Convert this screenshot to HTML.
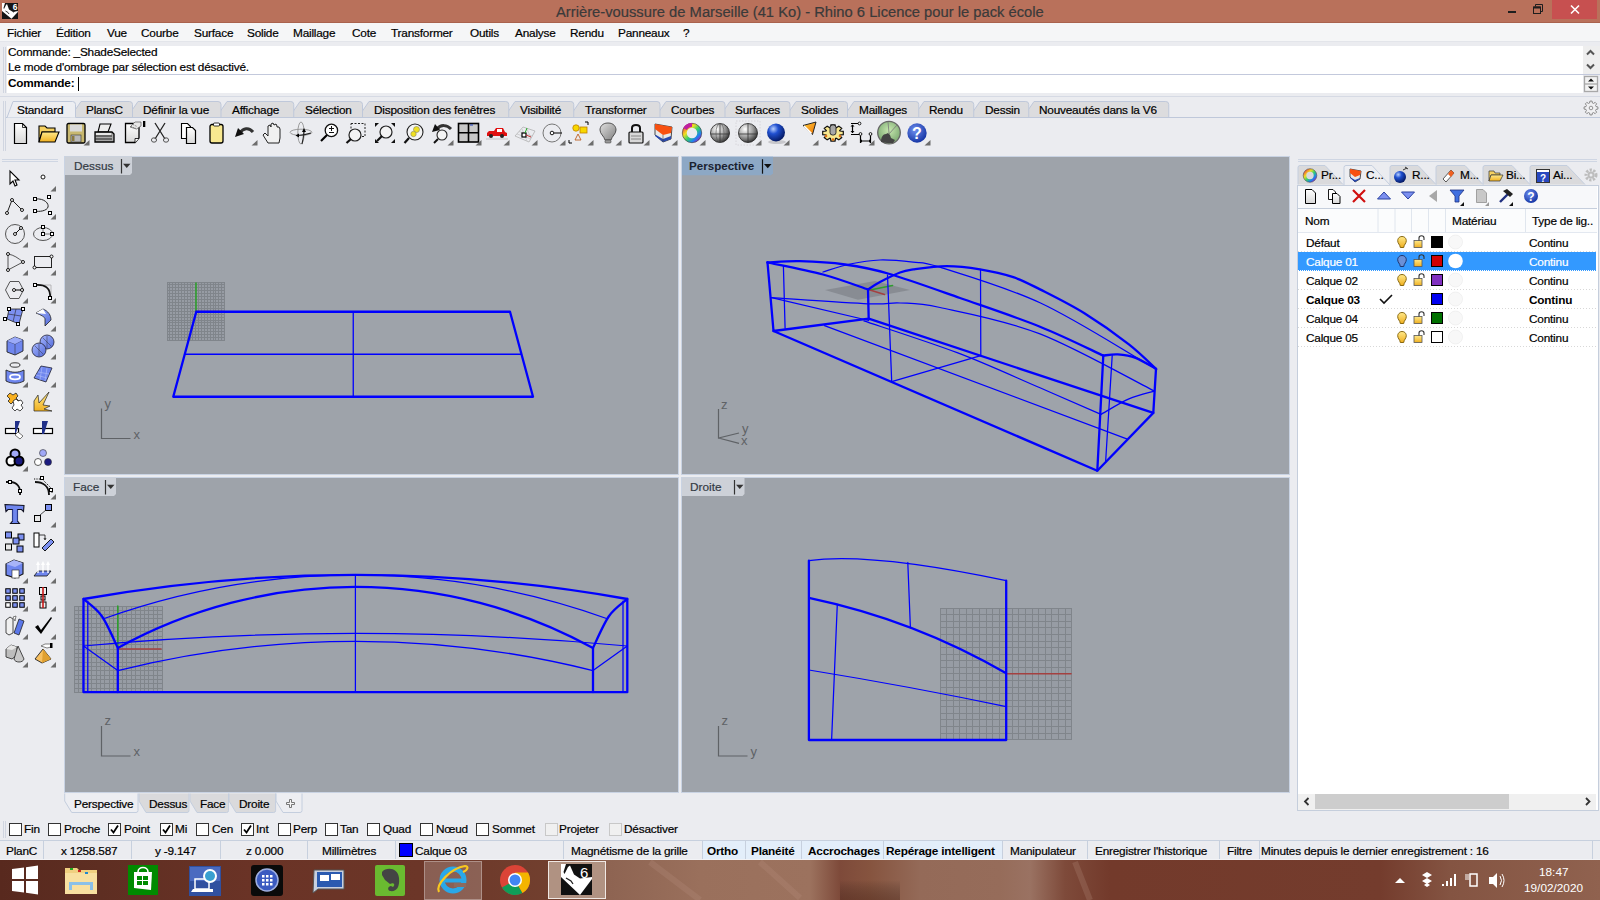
<!DOCTYPE html>
<html><head><meta charset="utf-8">
<style>
*{margin:0;padding:0;box-sizing:border-box}
html,body{width:1600px;height:900px;overflow:hidden;background:#EBECF0;font-family:"Liberation Sans",sans-serif;font-size:11.6px;color:#000}
.a{position:absolute}
.t{position:absolute;white-space:nowrap;line-height:14px;-webkit-text-stroke:0.2px currentColor}
svg{position:absolute;left:0;top:0}
</style></head><body>
<div class="a" style="left:0px;top:0px;width:1600px;height:23px;background:#B9715B"></div>
<div class="a" style="left:0px;top:23px;width:1600px;height:18px;background:#F5F6F7"></div>
<div class="a" style="left:0px;top:41px;width:1600px;height:1px;background:#E3E5EA"></div>
<div class="a" style="left:7px;top:46px;width:1576px;height:47px;background:#fff"></div>
<div class="a" style="left:7px;top:74px;width:1593px;height:1px;background:#C3C9DC"></div>
<div class="a" style="left:3px;top:47px;width:1px;height:46px;background:#D0D5E0"></div>
<div class="a" style="left:5px;top:47px;width:1px;height:46px;background:#D0D5E0"></div>
<div class="a" style="left:0px;top:96px;width:1600px;height:1px;background:#D6DAE4"></div>
<div class="a" style="left:3px;top:101px;width:1px;height:50px;background:#D0D5E0"></div>
<div class="a" style="left:5px;top:101px;width:1px;height:50px;background:#D0D5E0"></div>
<div class="a" style="left:6px;top:117px;width:1594px;height:1px;background:#BCC8DA"></div>
<div class="a" style="left:64px;top:156px;width:615px;height:319px;background:#C9D3E3"></div>
<div class="a" style="left:65px;top:157px;width:613px;height:317px;background:#9EA3AA"></div>
<div class="a" style="left:681px;top:156px;width:609px;height:319px;background:#C9D3E3"></div>
<div class="a" style="left:682px;top:157px;width:607px;height:317px;background:#9EA3AA"></div>
<div class="a" style="left:64px;top:477px;width:615px;height:316px;background:#C9D3E3"></div>
<div class="a" style="left:65px;top:478px;width:613px;height:314px;background:#9EA3AA"></div>
<div class="a" style="left:681px;top:477px;width:609px;height:316px;background:#C9D3E3"></div>
<div class="a" style="left:682px;top:478px;width:607px;height:314px;background:#9EA3AA"></div>
<div class="a" style="left:1297px;top:185px;width:302px;height:626px;background:#fff;border:1px solid #C5CEDC"></div>
<div class="a" style="left:1298px;top:186px;width:299px;height:23px;background:#F7F8FA"></div>
<div class="a" style="left:1298px;top:208px;width:299px;height:1px;background:#C5CEDC"></div>
<div class="a" style="left:1298px;top:209px;width:299px;height:23px;background:#FBFCFD"></div>
<div class="a" style="left:1298px;top:232px;width:299px;height:1px;background:#E3E8F0"></div>
<div class="a" style="left:1298px;top:252px;width:298px;height:19px;background:#3399FF"></div>
<div class="a" style="left:1298px;top:794px;width:298px;height:15.5px;background:#F0F0F0"></div>
<div class="a" style="left:1315px;top:794px;width:194px;height:15px;background:#CDCDCD"></div>
<div class="a" style="left:0px;top:840px;width:1600px;height:1px;background:#C7D0DE"></div>
<div class="a" style="left:0px;top:841px;width:1600px;height:18px;background:#EBECF0"></div>
<div class="a" style="left:702px;top:841px;width:301px;height:18px;background:#E3EEFA"></div>
<div class="a" style="left:43px;top:841px;width:1px;height:18px;background:#C7D0DE"></div>
<div class="a" style="left:131px;top:841px;width:1px;height:18px;background:#C7D0DE"></div>
<div class="a" style="left:220px;top:841px;width:1px;height:18px;background:#C7D0DE"></div>
<div class="a" style="left:307px;top:841px;width:1px;height:18px;background:#C7D0DE"></div>
<div class="a" style="left:395px;top:841px;width:1px;height:18px;background:#C7D0DE"></div>
<div class="a" style="left:563px;top:841px;width:1px;height:18px;background:#C7D0DE"></div>
<div class="a" style="left:702px;top:841px;width:1px;height:18px;background:#C7D0DE"></div>
<div class="a" style="left:745px;top:841px;width:1px;height:18px;background:#C7D0DE"></div>
<div class="a" style="left:801px;top:841px;width:1px;height:18px;background:#C7D0DE"></div>
<div class="a" style="left:883px;top:841px;width:1px;height:18px;background:#C7D0DE"></div>
<div class="a" style="left:1002px;top:841px;width:1px;height:18px;background:#C7D0DE"></div>
<div class="a" style="left:1087px;top:841px;width:1px;height:18px;background:#C7D0DE"></div>
<div class="a" style="left:1219px;top:841px;width:1px;height:18px;background:#C7D0DE"></div>
<div class="a" style="left:1259px;top:841px;width:1px;height:18px;background:#C7D0DE"></div>
<div class="a" style="left:1592px;top:841px;width:1px;height:18px;background:#C7D0DE"></div>
<div class="a" style="left:399px;top:843px;width:14px;height:14px;background:#0000FF;border:1px solid #000"></div>
<div class="a" style="left:0px;top:859px;width:1600px;height:1px;background:#F2F3F6"></div>
<div class="a" style="left:0px;top:860px;width:1600px;height:40px;background:linear-gradient(90deg,#58291E 0px,#5E2E22 100px,#6A3326 250px,#6C3628 420px,#72402F 560px,#8E6452 610px,#9A705C 700px,#9C725E 810px,#7E4A3A 840px,#86543F 870px,#946A58 920px,#966C5A 1000px,#9A7262 1030px,#7E4A3A 1065px,#733A2B 1110px,#743C2D 1380px,#845442 1450px,#90624F 1600px)"></div>
<div class="a" style="left:424px;top:861px;width:58px;height:39px;background:rgba(255,255,255,0.2);border:1px solid rgba(255,255,255,0.3)"></div>
<div class="a" style="left:548px;top:861px;width:58px;height:38px;background:#B09282;border:1px solid #F0E8E4"></div>
<svg width="1600" height="900" viewBox="0 0 1600 900">
<defs>
<linearGradient id="gDoc" x1="0" y1="0" x2="0" y2="1"><stop offset="0" stop-color="#fff"/><stop offset="1" stop-color="#D8D8D8"/></linearGradient>
<linearGradient id="gYel" x1="0" y1="0" x2="0" y2="1"><stop offset="0" stop-color="#FFE98A"/><stop offset="1" stop-color="#F0B020"/></linearGradient>
<radialGradient id="gSph" cx="0.35" cy="0.3" r="0.8"><stop offset="0" stop-color="#fff"/><stop offset="0.5" stop-color="#A0A0A0"/><stop offset="1" stop-color="#202020"/></radialGradient>
<radialGradient id="gBlue" cx="0.35" cy="0.3" r="0.8"><stop offset="0" stop-color="#B8D0FF"/><stop offset="0.35" stop-color="#2050D0"/><stop offset="1" stop-color="#001050"/></radialGradient>
<radialGradient id="gHelp" cx="0.4" cy="0.35" r="0.7"><stop offset="0" stop-color="#7090F0"/><stop offset="1" stop-color="#1030A0"/></radialGradient>
<radialGradient id="gGreen" cx="0.5" cy="0.4" r="0.6"><stop offset="0" stop-color="#C8E8B0"/><stop offset="1" stop-color="#7AA870"/></radialGradient>
<linearGradient id="gLB" x1="0" y1="0" x2="1" y2="1"><stop offset="0" stop-color="#A8B8FF"/><stop offset="1" stop-color="#5068D8"/></linearGradient>
<linearGradient id="gBulb" x1="0" y1="0" x2="1" y2="1"><stop offset="0" stop-color="#E0E0E0"/><stop offset="1" stop-color="#808080"/></linearGradient>
</defs>
<g transform="translate(12,123)"><path d="M2.5,0.5H10.5L14.5,4.5V20.5H2.5Z" fill="url(#gDoc)" stroke="#000" stroke-width="1.2"/><path d="M10.5,0.5V4.5H14.5" fill="none" stroke="#000" stroke-width="0.8"/></g>
<g transform="translate(38,123)"><path d="M1,3H7L9,5H17V9H4L1,19Z" fill="#F5D060" stroke="#000" stroke-width="1.1"/><path d="M4,9H21L17,19H1Z" fill="url(#gYel)" stroke="#000" stroke-width="1.1"/></g>
<g transform="translate(66,123)"><rect x="1" y="0.5" width="18" height="19.5" rx="1.5" fill="#C8B870" stroke="#000" stroke-width="1.3"/><rect x="4" y="1.5" width="12" height="7" fill="#DADADA"/><rect x="5" y="12" width="10" height="7" fill="#B8B8B8" stroke="#333" stroke-width="0.6"/><rect x="6" y="13" width="2.5" height="5" fill="#8A7A40"/></g>
<path d="M89.5,140V145.6H83.5Z" fill="#6D6D6D"/>
<g transform="translate(94,123)"><path d="M6,1H17L14,9H4Z" fill="#EEE" stroke="#000" stroke-width="1.1"/><path d="M1,9H18L20,11V19H1Z" fill="#A8A8A8" stroke="#000" stroke-width="1.3"/><path d="M1,13H18M1,16H18" stroke="#222" stroke-width="1.2"/><rect x="2" y="10" width="15" height="2" fill="#E8E8E8"/></g>
<path d="M125.5,123.5H139V138L135,142.5H125.5Z" fill="url(#gDoc)" stroke="#000" stroke-width="1.3"/><path d="M135,142.5V138.5H139" fill="#fff" stroke="#000" stroke-width="0.8"/>
<path d="M130,127L135,122H141V126L136.5,129Z" fill="#E8E8E8" stroke="#555" stroke-width="0.7"/><path d="M131,126.5L136,128.5M133,124.5L137,126.5" stroke="#777" stroke-width="1" stroke-dasharray="1,1"/><rect x="143" y="121" width="2.3" height="6" fill="#000"/>
<g transform="translate(150,123)"><path d="M5,0L15,16M15,0L5,16" stroke="#222" stroke-width="1.3"/><ellipse cx="4" cy="17" rx="2.6" ry="2.2" fill="none" stroke="#555" stroke-width="1"/><ellipse cx="16" cy="17" rx="2.6" ry="2.2" fill="none" stroke="#555" stroke-width="1"/></g>
<g transform="translate(179,123)"><path d="M2.5,0.5H8.5L11.5,3.5V15.5H2.5Z" fill="#fff" stroke="#000" stroke-width="1.1"/><path d="M7.5,4.5H13.5L16.5,7.5V20.5H7.5Z" fill="url(#gDoc)" stroke="#000" stroke-width="1.2"/></g>
<g transform="translate(207,123)"><rect x="3" y="1.5" width="13" height="18.5" rx="2" fill="#F8E890" stroke="#000" stroke-width="1.3"/><rect x="6.5" y="0" width="6" height="3" rx="1" fill="#fff" stroke="#000" stroke-width="0.8"/></g>
<g transform="translate(234,123)"><path d="M6,10C9,5 15,4 19,9" fill="none" stroke="#333" stroke-width="3"/><path d="M1,14L4,5L10,11Z" fill="#111"/></g>
<path d="M257.5,140V145.6H251.5Z" fill="#6D6D6D"/>
<g transform="translate(262,123)"><path d="M6,20L1,12L3,10L6,13V3L8,2L9,4V1L11,0L12,2V2L14,1L15,3V4L17,4L18,6V15L17,20Z" fill="#F0F0F0" stroke="#222" stroke-width="1"/></g>
<ellipse cx="301" cy="132.3" rx="10.9" ry="3.1" fill="none" stroke="#888" stroke-width="0.8"/><ellipse cx="301" cy="133" rx="3.2" ry="11" fill="none" stroke="#888" stroke-width="0.8"/><path d="M298,135.5Q305,135 311,133M304,131Q303.5,138 302,144" fill="none" stroke="#222" stroke-width="1.1"/><path d="M304,128L306,132H302ZM295.5,135.5L299,133.5V137.5Z" fill="#000"/>
<circle cx="331.4" cy="130.4" r="6.2" fill="#fff" stroke="#111" stroke-width="1.3"/><path d="M327,135L321,141" stroke="#000" stroke-width="2.2"/><path d="M329,128.5H334M331.5,126V131M329,132.5H334" stroke="#111" stroke-width="1"/>
<g transform="translate(346,123)"><rect x="5" y="0.5" width="14" height="13" fill="none" stroke="#222" stroke-width="1" stroke-dasharray="2,1.5"/><circle cx="9" cy="12" r="6" fill="#F4F4F4" stroke="#222" stroke-width="1.2"/><path d="M5,16L0.5,20" stroke="#111" stroke-width="2.2"/></g>
<g transform="translate(375,123)"><path d="M0,0H4L0,4ZM20,0H16L20,4ZM0,20H4L0,16ZM20,20H16L20,16Z" fill="#111"/><circle cx="11" cy="9" r="6" fill="#F4F4F4" stroke="#222" stroke-width="1.2"/><path d="M7,13L2,18" stroke="#111" stroke-width="2.2"/></g>
<g transform="translate(404,123)"><circle cx="11" cy="9" r="8" fill="#F4F4F4" stroke="#222" stroke-width="1.1"/><circle cx="12.5" cy="6.5" r="3" fill="#F0E020" stroke="#886" stroke-width="0.6"/><circle cx="9.5" cy="11" r="2.7" fill="#F0E020" stroke="#886" stroke-width="0.6"/><path d="M5,15L0.5,20" stroke="#111" stroke-width="2.2"/></g>
<g transform="translate(432,123)"><path d="M5,6C9,1 15,2 19,6" fill="none" stroke="#333" stroke-width="3"/><path d="M0,9L3,1L8,7Z" fill="#111"/><circle cx="10" cy="12" r="5" fill="#F4F4F4" stroke="#222" stroke-width="1.1"/><path d="M6,16L2,20" stroke="#111" stroke-width="2"/></g>
<path d="M453.5,140V145.6H447.5Z" fill="#6D6D6D"/>
<g transform="translate(458,123)"><rect x="0.5" y="0.5" width="20" height="18.5" fill="#C8C8C8" stroke="#000" stroke-width="1.6"/><path d="M10.5,0.5V19M0.5,9.8H20.5" stroke="#000" stroke-width="1.6"/><rect x="12" y="1.5" width="3" height="1" fill="#2040C0"/></g>
<path d="M481.5,140V145.6H475.5Z" fill="#6D6D6D"/>
<g transform="translate(486,123)"><path d="M1,10L3,8H8L10,5H17L19,9L21,10V13H1Z" fill="#E01010"/><rect x="11" y="6" width="5" height="3" fill="#fff"/><circle cx="5" cy="13" r="2" fill="#222"/><circle cx="16" cy="13" r="2" fill="#222"/><path d="M0,16H22" stroke="#AAA" stroke-width="0.6"/></g>
<path d="M509.5,140V145.6H503.5Z" fill="#6D6D6D"/>
<g transform="translate(514,123)"><path d="M1,13L9,4L21,8L15,19Z" fill="none" stroke="#AAA" stroke-width="0.7"/><path d="M5,8.5L18,13M3,11L17,16M8,6L13,18M13,6L17,15" stroke="#BBB" stroke-width="0.6"/><rect x="8" y="10" width="4" height="4" fill="#fff" stroke="#000" stroke-width="1.2"/><path d="M11,10L13,5" stroke="#2A2" stroke-width="1"/><path d="M12,12L17,14" stroke="#C33" stroke-width="1"/></g>
<path d="M537.5,140V145.6H531.5Z" fill="#6D6D6D"/>
<g transform="translate(542,123)"><circle cx="10" cy="10" r="9" fill="none" stroke="#777" stroke-width="1"/><circle cx="10" cy="10" r="1.8" fill="#fff" stroke="#000" stroke-width="0.9"/><path d="M12,10H20" stroke="#000" stroke-width="1"/></g>
<path d="M565.5,140V145.6H559.5Z" fill="#6D6D6D"/>
<g transform="translate(570,123)"><circle cx="6" cy="5" r="3.2" fill="#F8D800" stroke="#C08000" stroke-width="0.8"/><rect x="10" y="4" width="7" height="6" fill="#F8D800" stroke="#C08000" stroke-width="0.8"/><path d="M8,11L11,17H5Z" fill="none" stroke="#C06020" stroke-width="0.9"/><path d="M15,-1H18V2M-1,17V20H2" fill="none" stroke="#000" stroke-width="1"/></g>
<path d="M593.5,140V145.6H587.5Z" fill="#6D6D6D"/>
<g transform="translate(598,123)"><path d="M10,0C4,0 2,4 2,7C2,11 6,13 7,17H13C14,13 18,11 18,7C18,4 16,0 10,0Z" fill="url(#gBulb)" stroke="#444" stroke-width="0.9"/><rect x="7" y="17" width="6" height="3" rx="1" fill="#999" stroke="#444" stroke-width="0.6"/></g>
<path d="M621.5,140V145.6H615.5Z" fill="#6D6D6D"/>
<g transform="translate(626,123)"><path d="M6,9V5C6,1 14,1 14,5V9" fill="none" stroke="#111" stroke-width="2"/><rect x="3" y="9" width="14" height="11" rx="1" fill="#D8D8D8" stroke="#111" stroke-width="1.2"/><path d="M5,13H15M5,16H15" stroke="#888" stroke-width="1"/></g>
<path d="M649.5,140V145.6H643.5Z" fill="#6D6D6D"/>
<g transform="translate(654,123)"><path d="M1,1L18,4L17,16L9,19L1,12Z" fill="#E8E8E8" stroke="#222" stroke-width="0.8"/><path d="M1,1L18,4L17,10L9,12L1,6Z" fill="#F85010"/><path d="M2,12L9,16L17,13L17,16L9,19L1,13Z" fill="#2848B0"/><path d="M9,12V19" stroke="#444" stroke-width="0.6"/></g>
<path d="M677.5,140V145.6H671.5Z" fill="#6D6D6D"/>
<g transform="translate(682,123)"><circle cx="10" cy="10" r="7.5" fill="none" stroke="url(#cw)" stroke-width="4.5"/></g>
<defs><linearGradient id="cw" x1="0" y1="0" x2="1" y2="1"><stop offset="0" stop-color="#F04040"/><stop offset="0.3" stop-color="#F0E020"/><stop offset="0.55" stop-color="#30D070"/><stop offset="0.8" stop-color="#2080F0"/><stop offset="1" stop-color="#A020C0"/></linearGradient></defs>
<g transform="translate(682,123)"><circle cx="10" cy="10" r="9.7" fill="none" stroke="#333" stroke-width="0.6"/><path d="M3,6A8,8 0 0 1 10,2" fill="none" stroke="#C020A0" stroke-width="4"/></g>
<path d="M705.5,140V145.6H699.5Z" fill="#6D6D6D"/>
<g transform="translate(710,123)"><circle cx="10" cy="10" r="9.5" fill="url(#gSph)" stroke="#222" stroke-width="0.8"/><path d="M10,0.5V19.5M0.5,11H19.5" stroke="#333" stroke-width="0.8"/><ellipse cx="10" cy="10" rx="4" ry="9.5" fill="none" stroke="#555" stroke-width="0.6"/></g>
<g transform="translate(738,123)"><rect x="-2" y="-2" width="24" height="24" fill="none" stroke="#D0D0D4" stroke-width="0.8" stroke-dasharray="1.5,1.5"/><circle cx="10" cy="10" r="9.5" fill="url(#gSph)" stroke="#222" stroke-width="0.8"/><path d="M10,0.5V19.5M0.5,11H19.5" stroke="#333" stroke-width="0.8"/></g>
<path d="M761.5,140V145.6H755.5Z" fill="#6D6D6D"/>
<g transform="translate(766,123)"><ellipse cx="11" cy="19" rx="9" ry="2" fill="#C8C8CC"/><circle cx="10" cy="9.5" r="9" fill="url(#gBlue)"/></g>
<path d="M789.5,140V145.6H783.5Z" fill="#6D6D6D"/>
<defs><linearGradient id="gOr" x1="0" y1="0" x2="1" y2="1"><stop offset="0" stop-color="#FFD040"/><stop offset="1" stop-color="#F07000"/></linearGradient></defs>
<path d="M803,125.5L816,122L812.5,134.5Z" fill="url(#gOr)" stroke="#222" stroke-width="1"/><path d="M804,126L811.5,133.5" stroke="#fff" stroke-width="1.6"/>
<path d="M818.5,140V145.6H812.5Z" fill="#6D6D6D"/>
<path d="M839.89,131.01 L843.30,131.38 L843.30,134.62 L839.89,134.99 L839.67,135.41 L841.74,137.57 L838.82,139.86 L836.07,138.23 L835.54,138.40 L835.07,141.08 L830.93,141.08 L830.46,138.40 L829.93,138.23 L827.18,139.86 L824.26,137.57 L826.33,135.41 L826.11,134.99 L822.70,134.62 L822.70,131.38 L826.11,131.01 L826.33,130.59 L824.26,128.43 L827.18,126.14 L829.93,127.77 L830.46,127.60 L830.93,124.92 L835.07,124.92 L835.54,127.60 L836.07,127.77 L838.82,126.14 L841.74,128.43 L839.67,130.59Z" fill="#F8E890" stroke="#111" stroke-width="1.2"/><circle cx="826" cy="136" r="1.3" fill="#E07010"/><circle cx="840" cy="136" r="1.3" fill="#E07010"/><circle cx="833" cy="139.5" r="1.3" fill="#E07010"/><rect x="830" y="125" width="6" height="10" rx="2.5" fill="#A8A8A8" stroke="#222" stroke-width="0.9"/>
<path d="M846.5,140V145.6H840.5Z" fill="#6D6D6D"/>
<path d="M851,123.5H858M851,134.5H859M860.5,135.5V143M870.5,135.5V143M852.5,125V133M862,141H869" fill="none" stroke="#000" stroke-width="1.2"/><path d="M850.5,126.5L852.5,124.5L854.5,126.5ZM850.5,131L852.5,133L854.5,131ZM862,139.3V142.7L860.3,141ZM869,139.3V142.7L870.7,141Z" fill="#000"/><circle cx="859.5" cy="123.5" r="1.4" fill="#fff" stroke="#000" stroke-width="0.9"/><circle cx="860.5" cy="134" r="1.4" fill="#fff" stroke="#000" stroke-width="0.9"/><circle cx="870.5" cy="134" r="1.4" fill="#fff" stroke="#000" stroke-width="0.9"/>
<path d="M874.5,140V145.6H868.5Z" fill="#6D6D6D"/>
<circle cx="889" cy="132.6" r="11.3" fill="url(#gGreen)" stroke="#666" stroke-width="1.3"/><path d="M881,142C881,137 883,134 886,134L888,133L890,135L891,138L895,140L893,143L887,143Z" fill="#444"/><path d="M888,122L889,133M889,134L897,125" stroke="#777" stroke-width="0.8"/>
<g transform="translate(907,123)"><circle cx="10" cy="10" r="9.7" fill="url(#gHelp)"/><text x="10" y="16" text-anchor="middle" font-family="Liberation Sans" font-weight="bold" font-size="16" fill="#fff">?</text></g>
<path d="M930.5,140V145.6H924.5Z" fill="#6D6D6D"/>
<path d="M1023,117.5 L1034,101.5 H1165.75 Q1168.75,101.5 1168.75,104.5 V117.5" fill="#DCDCDE" stroke="#BFC8DA" stroke-width="1"/>
<path d="M969,117.5 L980,101.5 H1025.75 Q1028.75,101.5 1028.75,104.5 V117.5" fill="#DCDCDE" stroke="#BFC8DA" stroke-width="1"/>
<path d="M913,117.5 L924,101.5 H970.75 Q973.75,101.5 973.75,104.5 V117.5" fill="#DCDCDE" stroke="#BFC8DA" stroke-width="1"/>
<path d="M843,117.5 L854,101.5 H915.75 Q918.75,101.5 918.75,104.5 V117.5" fill="#DCDCDE" stroke="#BFC8DA" stroke-width="1"/>
<path d="M785,117.5 L796,101.5 H844.5 Q847.5,101.5 847.5,104.5 V117.5" fill="#DCDCDE" stroke="#BFC8DA" stroke-width="1"/>
<path d="M719,117.5 L730,101.5 H787 Q790,101.5 790,104.5 V117.5" fill="#DCDCDE" stroke="#BFC8DA" stroke-width="1"/>
<path d="M655,117.5 L666,101.5 H722 Q725,101.5 725,104.5 V117.5" fill="#DCDCDE" stroke="#BFC8DA" stroke-width="1"/>
<path d="M569,117.5 L580,101.5 H657 Q660,101.5 660,104.5 V117.5" fill="#DCDCDE" stroke="#BFC8DA" stroke-width="1"/>
<path d="M504,117.5 L515,101.5 H570.75 Q573.75,101.5 573.75,104.5 V117.5" fill="#DCDCDE" stroke="#BFC8DA" stroke-width="1"/>
<path d="M358,117.5 L369,101.5 H505.75 Q508.75,101.5 508.75,104.5 V117.5" fill="#DCDCDE" stroke="#BFC8DA" stroke-width="1"/>
<path d="M289,117.5 L300,101.5 H359.5 Q362.5,101.5 362.5,104.5 V117.5" fill="#DCDCDE" stroke="#BFC8DA" stroke-width="1"/>
<path d="M216,117.5 L227,101.5 H290.75 Q293.75,101.5 293.75,104.5 V117.5" fill="#DCDCDE" stroke="#BFC8DA" stroke-width="1"/>
<path d="M127,117.5 L138,101.5 H218 Q221,101.5 221,104.5 V117.5" fill="#DCDCDE" stroke="#BFC8DA" stroke-width="1"/>
<path d="M70,117.5 L81,101.5 H129.5 Q132.5,101.5 132.5,104.5 V117.5" fill="#DCDCDE" stroke="#BFC8DA" stroke-width="1"/>
<path d="M7,117.5 L13,101.5 H72.5 Q75.5,101.5 75.5,104.5 V117.5" fill="#EDEEF2" stroke="#BFC8DA" stroke-width="1"/>
<path d="M76.0,117.5H1600" stroke="#BFC8DA" stroke-width="1"/>
<path d="M65,156.5 H132 V173.0 L130,175.0 H65 Z" fill="#CDD1D8"/>
<path d="M121.5,159.0V173.5" stroke="#333" stroke-width="1.2"/>
<path d="M123,163.7H130.5L126.75,168.0Z" fill="#333"/>
<path d="M682,156.7 H773 V173.2 L771,175.2 H682 Z" fill="#8DA8C5"/>
<path d="M762.5,159.2V173.7" stroke="#111" stroke-width="1.2"/>
<path d="M764,163.89999999999998H771.5L767.75,168.2Z" fill="#111"/>
<path d="M65,477.5 H116 V494.0 L114,496.0 H65 Z" fill="#CDD1D8"/>
<path d="M105.5,480.0V494.5" stroke="#333" stroke-width="1.2"/>
<path d="M107,484.7H114.5L110.75,489.0Z" fill="#333"/>
<path d="M682,477.5 H744.5 V494.0 L742.5,496.0 H682 Z" fill="#CDD1D8"/>
<path d="M734.5,480.0V494.5" stroke="#333" stroke-width="1.2"/>
<path d="M736,484.7H743.5L739.75,489.0Z" fill="#333"/>
<path d="M276,793.5 V801 L283,812.5 H300 Q302,812.5 302,810.5 V793.5" fill="#EDEEF2" stroke="#C4CEDE" stroke-width="1"/>
<path d="M229,793.5 V801 L236,812.5 H273.6 Q275.6,812.5 275.6,810.5 V793.5" fill="#DADADC" stroke="#C4CEDE" stroke-width="1"/>
<path d="M190,793.5 V801 L197,812.5 H226.5 Q228.5,812.5 228.5,810.5 V793.5" fill="#DADADC" stroke="#C4CEDE" stroke-width="1"/>
<path d="M139,793.5 V801 L146,812.5 H187 Q189,812.5 189,810.5 V793.5" fill="#DADADC" stroke="#C4CEDE" stroke-width="1"/>
<path d="M64.7,793.5 V801 L71.7,812.5 H136 Q138,812.5 138,810.5 V793.5" fill="#EDEEF2" stroke="#C4CEDE" stroke-width="1"/>
<path d="M289.5,799.5H291.5V802.5H294.5V804.5H291.5V807.5H289.5V804.5H286.5V802.5H289.5Z" fill="#F4F4F4" stroke="#777" stroke-width="1"/>
<path d="M3.5,821V838M5.5,821V838" stroke="#D0D5E0" stroke-width="1"/>
<rect x="9.5" y="823.5" width="12" height="12" fill="#fff" stroke="#333" stroke-width="1"/>
<rect x="48.5" y="823.5" width="12" height="12" fill="#fff" stroke="#333" stroke-width="1"/>
<rect x="108.5" y="823.5" width="12" height="12" fill="#fff" stroke="#333" stroke-width="1"/>
<path d="M111,829.5L113.5,832.5L118,825.5" fill="none" stroke="#000" stroke-width="1.8"/>
<rect x="160.5" y="823.5" width="12" height="12" fill="#fff" stroke="#333" stroke-width="1"/>
<path d="M163,829.5L165.5,832.5L170,825.5" fill="none" stroke="#000" stroke-width="1.8"/>
<rect x="196.5" y="823.5" width="12" height="12" fill="#fff" stroke="#333" stroke-width="1"/>
<rect x="241.5" y="823.5" width="12" height="12" fill="#fff" stroke="#333" stroke-width="1"/>
<path d="M244,829.5L246.5,832.5L251,825.5" fill="none" stroke="#000" stroke-width="1.8"/>
<rect x="278.5" y="823.5" width="12" height="12" fill="#fff" stroke="#333" stroke-width="1"/>
<rect x="325.5" y="823.5" width="12" height="12" fill="#fff" stroke="#333" stroke-width="1"/>
<rect x="367.5" y="823.5" width="12" height="12" fill="#fff" stroke="#333" stroke-width="1"/>
<rect x="420.5" y="823.5" width="12" height="12" fill="#fff" stroke="#333" stroke-width="1"/>
<rect x="476.5" y="823.5" width="12" height="12" fill="#fff" stroke="#333" stroke-width="1"/>
<rect x="545.5" y="823.5" width="12" height="12" fill="#F0F0F0" stroke="#C8C8C8" stroke-width="1"/>
<rect x="609.5" y="823.5" width="12" height="12" fill="#F0F0F0" stroke="#C8C8C8" stroke-width="1"/>
<path d="M2,159.5H58M2,161.5H58" stroke="#C8D0E0" stroke-width="0.8"/>
<g transform="translate(5,168)"><path d="M5,3V16L8,13L10,18L12,17L10,12H14Z" fill="#fff" stroke="#000" stroke-width="1.1"/></g>
<g transform="translate(33,168)"><circle cx="10" cy="9" r="2" fill="#fff" stroke="#000" stroke-width="0.9"/></g>
<path d="M56,186V191.5H50.5Z" fill="#6D6D6D"/>
<g transform="translate(5,196)"><path d="M2,17L7,4L17,14" fill="none" stroke="#222" stroke-width="1"/><circle cx="2" cy="17" r="1.5" fill="#fff" stroke="#000" stroke-width="0.9"/><circle cx="7" cy="4" r="1.5" fill="#fff" stroke="#000" stroke-width="0.9"/><circle cx="17" cy="14" r="1.5" fill="#fff" stroke="#000" stroke-width="0.9"/></g>
<path d="M28,214V219.5H22.5Z" fill="#6D6D6D"/>
<g transform="translate(33,196)"><path d="M2,3C12,2 16,8 15,11C14,15 6,16 2,15" fill="none" stroke="#222" stroke-width="1"/><rect x="0.5" y="1.5" width="3" height="3" fill="#fff" stroke="#000" stroke-width="1"/><rect x="14.5" y="-0.5" width="3" height="3" fill="#fff" stroke="#000" stroke-width="1"/><rect x="0.5" y="13.5" width="3" height="3" fill="#fff" stroke="#000" stroke-width="1"/><rect x="15.5" y="15.5" width="3" height="3" fill="#fff" stroke="#000" stroke-width="1"/></g>
<path d="M56,214V219.5H50.5Z" fill="#6D6D6D"/>
<g transform="translate(5,224)"><circle cx="10" cy="10" r="9.5" fill="none" stroke="#555" stroke-width="1"/><path d="M10,10L16,4" stroke="#111" stroke-width="1"/><circle cx="10" cy="10" r="1.5" fill="#fff" stroke="#000" stroke-width="0.9"/><circle cx="16" cy="4" r="1.5" fill="#fff" stroke="#000" stroke-width="0.9"/></g>
<path d="M28,242V247.5H22.5Z" fill="#6D6D6D"/>
<g transform="translate(33,224)"><ellipse cx="10" cy="10" rx="9.5" ry="6.5" fill="none" stroke="#555" stroke-width="1"/><path d="M10,3V10H19" fill="none" stroke="#555" stroke-width="0.8"/><rect x="8.5" y="1.5" width="3" height="3" fill="#fff" stroke="#000" stroke-width="1"/><rect x="8.5" y="8.5" width="3" height="3" fill="#fff" stroke="#000" stroke-width="1"/><rect x="17.5" y="8.5" width="3" height="3" fill="#fff" stroke="#000" stroke-width="1"/></g>
<path d="M56,242V247.5H50.5Z" fill="#6D6D6D"/>
<g transform="translate(5,252)"><path d="M3,2C9,3 13,6 18,10L3,18Z" fill="none" stroke="#444" stroke-width="0.9"/><circle cx="3" cy="2" r="1.5" fill="#fff" stroke="#000" stroke-width="0.9"/><circle cx="18" cy="10" r="1.5" fill="#fff" stroke="#000" stroke-width="0.9"/><circle cx="3" cy="18" r="1.5" fill="#fff" stroke="#000" stroke-width="0.9"/></g>
<path d="M28,270V275.5H22.5Z" fill="#6D6D6D"/>
<g transform="translate(33,252)"><rect x="1.5" y="4.5" width="17" height="11" fill="none" stroke="#222" stroke-width="1"/><circle cx="18.5" cy="4.5" r="1.5" fill="#fff" stroke="#000" stroke-width="0.9"/><circle cx="1.5" cy="15.5" r="1.5" fill="#fff" stroke="#000" stroke-width="0.9"/></g>
<path d="M56,270V275.5H50.5Z" fill="#6D6D6D"/>
<g transform="translate(5,280)"><path d="M5,1.5H14L18.5,10L14,18.5H5L0.5,10Z" fill="none" stroke="#444" stroke-width="0.9"/><path d="M9,10H17" stroke="#000" stroke-width="1"/><circle cx="9" cy="10" r="1.5" fill="#fff" stroke="#000" stroke-width="0.9"/><circle cx="17" cy="10" r="1.5" fill="#fff" stroke="#000" stroke-width="0.9"/></g>
<path d="M28,298V303.5H22.5Z" fill="#6D6D6D"/>
<g transform="translate(33,280)"><path d="M2,5H10V5L18,5V17" fill="none" stroke="#AAA" stroke-width="0.8"/><path d="M2,5C12,4 18,8 17,18" fill="none" stroke="#111" stroke-width="1.8"/><rect x="0.5" y="3.5" width="3" height="3" fill="#fff" stroke="#000" stroke-width="1"/><rect x="15.5" y="16.5" width="3" height="3" fill="#fff" stroke="#000" stroke-width="1"/></g>
<path d="M56,298V303.5H50.5Z" fill="#6D6D6D"/>
<g transform="translate(5,308)"><path d="M4,1L18,1L14,16L2,11Z" fill="#7C90F0" stroke="#222" stroke-width="0.8"/><path d="M11,1L8,14M3,6L16,8" stroke="#334" stroke-width="0.7"/><rect x="2.5" y="-0.5" width="3" height="3" fill="#fff" stroke="#000" stroke-width="1"/><rect x="16.5" y="-0.5" width="3" height="3" fill="#fff" stroke="#000" stroke-width="1"/><rect x="-1.5" y="9.5" width="3" height="3" fill="#fff" stroke="#000" stroke-width="1"/><rect x="11.5" y="14.5" width="3" height="3" fill="#fff" stroke="#000" stroke-width="1"/></g>
<path d="M28,326V331.5H22.5Z" fill="#6D6D6D"/>
<g transform="translate(33,308)"><path d="M3,5L10,1C15,3 18,7 18,12L12,18V11C12,9 8,7 3,5Z" fill="url(#gLB)" stroke="#222" stroke-width="0.8"/><path d="M3,5L10,1L13,6Z" fill="#fff"/></g>
<path d="M56,326V331.5H50.5Z" fill="#6D6D6D"/>
<g transform="translate(5,336)"><path d="M2,5L10,1L18,4V15L10,19L2,16Z" fill="#6F86EE" stroke="#222" stroke-width="0.9"/><path d="M2,5L10,8L18,4M10,8V19" fill="none" stroke="#334" stroke-width="0.6"/><path d="M2,5L10,1L18,4L10,8Z" fill="#9BAAF8"/></g>
<path d="M28,354V359.5H22.5Z" fill="#6D6D6D"/>
<g transform="translate(33,336)"><circle cx="14" cy="6" r="7" fill="url(#gLB)" stroke="#223" stroke-width="0.8"/><circle cx="6" cy="14" r="7" fill="url(#gLB)" stroke="#223" stroke-width="0.8"/><path d="M10,2L18,10M2,10L10,18M14,0V12M6,8V20" stroke="#334" stroke-width="0.5"/></g>
<path d="M56,354V359.5H50.5Z" fill="#6D6D6D"/>
<g transform="translate(5,364)"><ellipse cx="10" cy="1" rx="5" ry="2.2" fill="none" stroke="#222" stroke-width="0.9"/><path d="M1,6C7,9 13,9 19,6V17C13,20 7,20 1,17Z" fill="#6F86EE" stroke="#222" stroke-width="0.9"/><ellipse cx="10" cy="13" rx="5" ry="2.3" fill="none" stroke="#fff" stroke-width="1.8"/></g>
<path d="M28,382V387.5H22.5Z" fill="#6D6D6D"/>
<g transform="translate(33,364)"><path d="M1,14L8,2L19,4L13,18Z" fill="#6F86EE" stroke="#223" stroke-width="0.8"/><path d="M5,8L16,10M3,11L14,14M9,3L7,16M14,4L12,17" stroke="#A8B8F8" stroke-width="0.7"/></g>
<path d="M56,382V387.5H50.5Z" fill="#6D6D6D"/>
<g transform="translate(5,392)"><path d="M2,4L5,1L8,3L11,1L13,4L11,6L14,9L11,12L8,10L6,12L3,9L5,7Z" fill="#F8B020" stroke="#222" stroke-width="0.8"/><path d="M8,9L11,7L13,9L16,8L18,11L16,13L18,16L15,19L12,17L10,19L7,16L9,13Z" fill="#fff" stroke="#222" stroke-width="0.8"/></g>
<g transform="translate(33,392)"><path d="M1,19V9L5,3L6,11L16,0L10,13L17,14L11,17L19,19Z" fill="url(#gYel)" stroke="#222" stroke-width="0.7"/></g>
<g transform="translate(5,420)"><rect x="0.5" y="8.5" width="13" height="5" fill="#fff" stroke="#000" stroke-width="1.2"/><path d="M10,1H15L11,13H10Z" fill="#203088"/><path d="M13,12L18,16L15,19L10,15Z" fill="#fff" stroke="#555" stroke-width="0.8"/></g>
<g transform="translate(33,420)"><rect x="0.5" y="8.5" width="19" height="5" fill="#fff" stroke="#000" stroke-width="1.2"/><path d="M9,1H15L11,14H9Z" fill="#203088"/></g>
<g transform="translate(5,448)"><circle cx="10" cy="6" r="4.5" fill="#A0A8F8" stroke="#000" stroke-width="2"/><circle cx="6" cy="13" r="4.5" fill="#fff" stroke="#000" stroke-width="2"/><circle cx="14" cy="13" r="4.5" fill="#1A1A80" stroke="#000" stroke-width="2"/></g>
<path d="M28,466V471.5H22.5Z" fill="#6D6D6D"/>
<g transform="translate(33,448)"><circle cx="10" cy="5" r="3.5" fill="#A0A8F8" stroke="#333" stroke-width="0.6"/><circle cx="5" cy="14" r="3.5" fill="#fff" stroke="#333" stroke-width="0.8"/><circle cx="15" cy="14" r="3.5" fill="#1A1A80" stroke="#333" stroke-width="0.6"/></g>
<g transform="translate(5,476)"><path d="M1,6H5C12,6 16,11 15,19" fill="none" stroke="#111" stroke-width="1.8"/><rect x="3.5" y="4.5" width="3" height="3" fill="#fff" stroke="#000" stroke-width="1"/><rect x="13.5" y="13.5" width="3" height="3" fill="#fff" stroke="#000" stroke-width="1"/></g>
<g transform="translate(33,476)"><path d="M2,6C10,6 16,10 16,19" fill="none" stroke="#111" stroke-width="1.8"/><path d="M1,3H9M9,3L19,13V18" fill="none" stroke="#111" stroke-width="1" stroke-dasharray="1.2,1.2"/><rect x="7.5" y="0.5" width="3" height="3" fill="#fff" stroke="#000" stroke-width="1"/><rect x="16.5" y="12.5" width="3" height="3" fill="#fff" stroke="#000" stroke-width="1"/></g>
<path d="M56,494V499.5H50.5Z" fill="#6D6D6D"/>
<g transform="translate(5,504)"><path d="M0,0.5L19,1.5L18.5,7.5L16.5,5.5H12.5V17L14.5,19.5H5.5L7.5,17V5.5H3L1,7.5Z" fill="#6F86EE" stroke="#112" stroke-width="1.1"/><path d="M7.5,5.5V17M12.5,5.5V17" stroke="#2A3A90" stroke-width="1"/></g>
<g transform="translate(33,504)"><rect x="1.5" y="11.5" width="6" height="6" fill="#E8E8E8" stroke="#000" stroke-width="1"/><rect x="12.5" y="0.5" width="6" height="6" fill="#7C90F0" stroke="#000" stroke-width="1"/><path d="M7,11L13,6" stroke="#222" stroke-width="0.8"/></g>
<path d="M56,522V527.5H50.5Z" fill="#6D6D6D"/>
<g transform="translate(5,532)"><rect x="0.5" y="0.0" width="6" height="6" fill="#7C90F0" stroke="#000" stroke-width="1"/><rect x="13.0" y="2.0" width="6" height="6" fill="#7C90F0" stroke="#000" stroke-width="1"/><rect x="8.0" y="6.0" width="6" height="6" fill="#7C90F0" stroke="#000" stroke-width="1"/><rect x="0.5" y="12.0" width="6" height="6" fill="#E8E8E8" stroke="#000" stroke-width="1"/><rect x="12.0" y="14.0" width="6" height="6" fill="#7C90F0" stroke="#000" stroke-width="1"/></g>
<g transform="translate(33,532)"><rect x="1" y="1" width="5" height="14" fill="#fff" stroke="#000" stroke-width="1"/><path d="M9,16L18,7L21,10L12,19Z" fill="#7C90F0" stroke="#000" stroke-width="0.9"/><path d="M6,3H12V7M11,6L12,8L13,6" fill="none" stroke="#111" stroke-width="0.8"/></g>
<g transform="translate(5,560)"><path d="M1,4L9,0L18,3V14L10,18L1,15Z" fill="#6F86EE" stroke="#111" stroke-width="1.1"/><path d="M1,4L9,0L18,3L10,7Z" fill="#A8B4F8"/><rect x="7" y="10" width="7" height="8" fill="#fff" stroke="#222" stroke-width="0.6"/></g>
<path d="M28,578V583.5H22.5Z" fill="#6D6D6D"/>
<g transform="translate(33,560)"><path d="M1,16L5,11H18L14,16Z" fill="#6F86EE" stroke="#111" stroke-width="0.8"/><path d="M5,13V4M10,13V4M15,13V4" stroke="#fff" stroke-width="1.4"/><path d="M3,5L5,1L7,5ZM8,5L10,1L12,5ZM13,5L15,1L17,5Z" fill="#fff"/></g>
<path d="M56,578V583.5H50.5Z" fill="#6D6D6D"/>
<g transform="translate(5,588)"><rect x="0.75" y="0.75" width="4.5" height="4.5" fill="#7C90F0" stroke="#000" stroke-width="1"/><rect x="7.75" y="0.75" width="4.5" height="4.5" fill="#7C90F0" stroke="#000" stroke-width="1"/><rect x="14.75" y="0.75" width="4.5" height="4.5" fill="#7C90F0" stroke="#000" stroke-width="1"/><rect x="0.75" y="7.75" width="4.5" height="4.5" fill="#7C90F0" stroke="#000" stroke-width="1"/><rect x="7.75" y="7.75" width="4.5" height="4.5" fill="#7C90F0" stroke="#000" stroke-width="1"/><rect x="14.75" y="7.75" width="4.5" height="4.5" fill="#7C90F0" stroke="#000" stroke-width="1"/><rect x="0.75" y="14.75" width="4.5" height="4.5" fill="#fff" stroke="#000" stroke-width="1"/><rect x="7.75" y="14.75" width="4.5" height="4.5" fill="#7C90F0" stroke="#000" stroke-width="1"/><rect x="14.75" y="14.75" width="4.5" height="4.5" fill="#7C90F0" stroke="#000" stroke-width="1"/></g>
<path d="M28,606V611.5H22.5Z" fill="#6D6D6D"/>
<g transform="translate(33,588)"><rect x="6.5" y="-0.5" width="7" height="7" fill="#EEE" stroke="#000" stroke-width="1"/><rect x="8.0" y="8.0" width="4" height="4" fill="#EEE" stroke="#000" stroke-width="1"/><rect x="7.0" y="14.0" width="6" height="6" fill="#EEE" stroke="#000" stroke-width="1"/><path d="M10,-1V20" stroke="#C81818" stroke-width="1.6"/></g>
<path d="M56,606V611.5H50.5Z" fill="#6D6D6D"/>
<g transform="translate(5,616)"><path d="M1,4L5,1L8,3V17L4,19L1,17Z" fill="#F0F0F0" stroke="#222" stroke-width="0.8"/><path d="M9,17L14,3L19,5L14,19Z" fill="#5C78EA" stroke="#222" stroke-width="0.8"/><path d="M8,1L11,0L10,5Z" fill="#fff" stroke="#333" stroke-width="0.6"/></g>
<path d="M28,634V639.5H22.5Z" fill="#6D6D6D"/>
<g transform="translate(33,616)"><path d="M2,11L5,9L8,14L18,1L19,2L8,18Z" fill="#000"/></g>
<path d="M56,634V639.5H50.5Z" fill="#6D6D6D"/>
<g transform="translate(5,644)"><path d="M1,5L6,1L12,3V11L7,15L1,13Z" fill="#BDBDBD" stroke="#222" stroke-width="0.8"/><path d="M1,5L6,1L12,3L7,6Z" fill="#E8E8E8"/><path d="M13,2L19,15C18,19 10,19 9,15Z" fill="#C8C8C8" stroke="#222" stroke-width="0.8"/></g>
<path d="M28,662V667.5H22.5Z" fill="#6D6D6D"/>
<g transform="translate(33,644)"><path d="M10,5L2,15L9,19L18,15Z" fill="#F8C060" stroke="#222" stroke-width="0.9"/><path d="M10,5L9,19L18,15Z" fill="#E0A030"/><path d="M8,2L12,0H18V3L14,4Z" fill="#fff" stroke="#333" stroke-width="0.6"/><rect x="17" y="-1" width="2.5" height="5" fill="#000"/></g>
<path d="M56,662V667.5H50.5Z" fill="#6D6D6D"/>
<path d="M0,22.5H1600" stroke="#A9624D" stroke-width="1"/>
<rect x="2" y="3" width="16" height="16" fill="#151515"/>
<path d="M2,3H5L3.5,8L4,9L6,5L7,4L9,9.5L13,12L17.8,11V12L11.5,18.7L2,11Z" fill="#fff"/><path d="M5.5,11L8,12.5L9,14" fill="none" stroke="#222" stroke-width="0.9"/><path d="M13.5,12.5L14.5,11.5" stroke="#222" stroke-width="0.8"/>
<text x="12.8" y="10.2" font-family="Liberation Sans" font-weight="bold" font-size="8.5" fill="#fff">6</text>
<rect x="1508" y="11" width="8" height="2" fill="#1E1E1E"/>
<path d="M1535.5,6.5V4.5H1542.5V11.5H1540.5" fill="none" stroke="#1E1E1E" stroke-width="1"/><rect x="1533.5" y="7" width="7" height="6.5" fill="none" stroke="#1E1E1E" stroke-width="1"/><path d="M1533.5,7.5H1540.5" stroke="#1E1E1E" stroke-width="2"/>
<rect x="1552" y="0" width="45" height="19" fill="#C75050"/>
<path d="M1571,5.5L1579,13.5M1579,5.5L1571,13.5" stroke="#fff" stroke-width="1.6"/>
<rect x="1583" y="46" width="17" height="28" fill="#EEEEEE"/><path d="M1587,54.5L1590.5,51L1594,54.5M1587,64.5L1590.5,68L1594,64.5" fill="none" stroke="#555" stroke-width="2"/>
<rect x="1584.5" y="76.5" width="13" height="15" fill="#F2F2F2" stroke="#A8A8A8" stroke-width="1.3"/><path d="M1584.5,84H1597.5" stroke="#A8A8A8" stroke-width="1.3"/><path d="M1588,81.5L1591,78.5L1594,81.5ZM1588,86.5L1591,89.5L1594,86.5Z" fill="#111"/>
<path d="M78.5,77V91" stroke="#000" stroke-width="1"/>
<g transform="translate(1591,108)"><path d="M5.00,-1.42 L6.92,-1.05 L6.92,1.05 L5.00,1.42 L4.54,2.53 L5.64,4.15 L4.15,5.64 L2.53,4.54 L1.42,5.00 L1.05,6.92 L-1.05,6.92 L-1.42,5.00 L-2.53,4.54 L-4.15,5.64 L-5.64,4.15 L-4.54,2.53 L-5.00,1.42 L-6.92,1.05 L-6.92,-1.05 L-5.00,-1.42 L-4.54,-2.53 L-5.64,-4.15 L-4.15,-5.64 L-2.53,-4.54 L-1.42,-5.00 L-1.05,-6.92 L1.05,-6.92 L1.42,-5.00 L2.53,-4.54 L4.15,-5.64 L5.64,-4.15 L4.54,-2.53Z" fill="#F0F0F2" stroke="#8A8A8A" stroke-width="1"/><circle r="1.8" fill="none" stroke="#8A8A8A" stroke-width="0.9"/></g>
<path d="M1298,159.5H1597M1298,161.5H1597" stroke="#C8D0E0" stroke-width="0.8"/>
<path d="M1530,184.5V167.5Q1530,165.5 1532,165.5H1567L1585,184.5" fill="#DADADC" stroke="#C4CEDE" stroke-width="1"/>
<path d="M1483,184.5V167.5Q1483,165.5 1485,165.5H1512L1530,184.5" fill="#DADADC" stroke="#C4CEDE" stroke-width="1"/>
<path d="M1436,184.5V167.5Q1436,165.5 1438,165.5H1465L1483,184.5" fill="#DADADC" stroke="#C4CEDE" stroke-width="1"/>
<path d="M1390,184.5V167.5Q1390,165.5 1392,165.5H1418L1436,184.5" fill="#DADADC" stroke="#C4CEDE" stroke-width="1"/>
<path d="M1298,184.5V167.5Q1298,165.5 1300,165.5H1325L1343,184.5" fill="#DADADC" stroke="#C4CEDE" stroke-width="1"/>
<path d="M1344,185V167.5Q1344,165.5 1346,165.5H1372L1390,185" fill="#EDEEF2" stroke="#C4CEDE" stroke-width="1"/>
<circle cx="1310" cy="175.5" r="5.2" fill="none" stroke="url(#cw)" stroke-width="3"/><circle cx="1310" cy="175.5" r="6.8" fill="none" stroke="#333" stroke-width="0.5"/>
<g transform="translate(1349,168)"><path d="M1,1L12,3L11,11L6,14L1,9Z" fill="#E8E8E8" stroke="#222" stroke-width="0.8"/><path d="M1,1L12,3L11,7L6,9L1,5Z" fill="#F85010"/><path d="M1,9L6,12L11,10V11L6,14L1,10Z" fill="#2848B0"/></g>
<circle cx="1400" cy="177" r="6" fill="url(#gBlue)"/><path d="M1403,170L1407,168M1405,167L1408,169" stroke="#333" stroke-width="1"/>
<g transform="translate(1442,168)"><path d="M1,11L9,2L12,5L4,14Z" fill="#fff" stroke="#333" stroke-width="0.8"/><path d="M6,6L9,2L12,5L9,9Z" fill="#F06020"/></g>
<g transform="translate(1489,170)"><path d="M0,1H5L6,3H11V5H2L0,11Z" fill="#F5D060" stroke="#333" stroke-width="0.7"/><path d="M2,5H14L11,11H0Z" fill="url(#gYel)" stroke="#333" stroke-width="0.7"/></g>
<rect x="1536.5" y="169.5" width="13" height="13" fill="#2848C0" stroke="#333" stroke-width="1"/><rect x="1537" y="170" width="12" height="2" fill="#fff"/><text x="1543" y="181.5" text-anchor="middle" font-family="Liberation Sans" font-size="10" font-weight="bold" fill="#fff">?</text>
<g transform="translate(1591,175)"><circle r="5" fill="none" stroke="#BDBDBD" stroke-width="3" stroke-dasharray="2.2,1.4"/><circle r="3.5" fill="#BDBDBD"/><circle r="1.5" fill="#EBECF0"/></g>
<g transform="translate(1305,189)"><path d="M0.5,0.5H7L10.5,4V14.5H0.5Z" fill="url(#gDoc)" stroke="#000" stroke-width="1"/></g>
<g transform="translate(1328,189)"><path d="M0.5,0.5H5L7.5,3V10.5H0.5Z" fill="#fff" stroke="#000" stroke-width="0.9"/><path d="M4.5,4.5H9L12,7.5V14.5H4.5Z" fill="url(#gDoc)" stroke="#000" stroke-width="1"/></g>
<path d="M1353,190L1365,202M1365,190L1353,202" stroke="#D01010" stroke-width="2.2"/>
<path d="M1377.5,199L1384,192L1390.5,199Z" fill="#7C90F0" stroke="#2840A0" stroke-width="1"/>
<path d="M1401.5,192L1408,199L1414.5,192Z" fill="#7C90F0" stroke="#2840A0" stroke-width="1"/>
<path d="M1437,190V202L1429,196Z" fill="#A8A8A8"/>
<path d="M1450,190H1464L1459,196V202H1455V196Z" fill="#4070E0" stroke="#203080" stroke-width="0.8"/>
<path d="M1464,202V206H1460Z" fill="#111"/>
<path d="M1476.5,189.5H1483L1486.5,193V202.5H1476.5Z" fill="#C8C8C8" stroke="#999" stroke-width="0.9"/>
<path d="M1489,202V206H1485Z" fill="#999"/>
<path d="M1500,202L1508,194" stroke="#203080" stroke-width="2.4"/><path d="M1503,191L1507,189L1513,194L1510,197Z" fill="#222"/>
<path d="M1513,202V206H1509Z" fill="#111"/>
<circle cx="1531" cy="196" r="7" fill="url(#gHelp)"/><text x="1531" y="200.5" text-anchor="middle" font-family="Liberation Sans" font-weight="bold" font-size="12" fill="#fff">?</text>
<path d="M1378,209V232" stroke="#E0E6EE" stroke-width="1"/>
<path d="M1395,209V232" stroke="#E0E6EE" stroke-width="1"/>
<path d="M1411.5,209V232" stroke="#E0E6EE" stroke-width="1"/>
<path d="M1428.5,209V232" stroke="#E0E6EE" stroke-width="1"/>
<path d="M1445.5,209V232" stroke="#E0E6EE" stroke-width="1"/>
<path d="M1525.5,209V232" stroke="#E0E6EE" stroke-width="1"/>
<path d="M1298,251.5H1596" stroke="#D8D8D8" stroke-width="1" stroke-dasharray="1,2"/>
<path d="M1298,289.5H1596" stroke="#D8D8D8" stroke-width="1" stroke-dasharray="1,2"/>
<path d="M1298,308.5H1596" stroke="#D8D8D8" stroke-width="1" stroke-dasharray="1,2"/>
<path d="M1298,327.5H1596" stroke="#D8D8D8" stroke-width="1" stroke-dasharray="1,2"/>
<path d="M1298,346.5H1596" stroke="#D8D8D8" stroke-width="1" stroke-dasharray="1,2"/>
<path d="M1298,270.5H1596" stroke="#fff" stroke-width="1" stroke-dasharray="1,1"/>
<path d="M1402,236.5C1398.5,236.5 1397.7,239.5 1397.7,240.8C1397.7,243.5 1400,244.5 1400.3,247.5H1403.7C1404,244.5 1406.3,243.5 1406.3,240.8C1406.3,239.5 1405.5,236.5 1402,236.5Z" fill="url(#gYel)" stroke="#7A5A00" stroke-width="0.9"/>
<rect x="1414" y="240.5" width="8" height="7" fill="url(#gYel)" stroke="#555" stroke-width="0.8"/><path d="M1419,240.5V238C1419,235 1424,235 1424,238V240" fill="none" stroke="#333" stroke-width="1.1"/>
<rect x="1431.5" y="236.5" width="11" height="11" fill="#000" stroke="#000" stroke-width="1"/>
<circle cx="1455.5" cy="242" r="7" fill="#F8F8F8" stroke="#EDEDED" stroke-width="0.8"/>
<path d="M1402,255.5C1398.5,255.5 1397.7,258.5 1397.7,259.8C1397.7,262.5 1400,263.5 1400.3,266.5H1403.7C1404,263.5 1406.3,262.5 1406.3,259.8C1406.3,258.5 1405.5,255.5 1402,255.5Z" fill="#6A90D8" stroke="#1A2A60" stroke-width="0.9"/>
<rect x="1414" y="259.5" width="8" height="7" fill="url(#gYel)" stroke="#555" stroke-width="0.8"/><path d="M1419,259.5V257C1419,254 1424,254 1424,257V259" fill="none" stroke="#333" stroke-width="1.1"/>
<rect x="1431.5" y="255.5" width="11" height="11" fill="#D00000" stroke="#000" stroke-width="1"/>
<circle cx="1455.5" cy="261" r="7.3" fill="#fff"/>
<path d="M1402,274.5C1398.5,274.5 1397.7,277.5 1397.7,278.8C1397.7,281.5 1400,282.5 1400.3,285.5H1403.7C1404,282.5 1406.3,281.5 1406.3,278.8C1406.3,277.5 1405.5,274.5 1402,274.5Z" fill="url(#gYel)" stroke="#7A5A00" stroke-width="0.9"/>
<rect x="1414" y="278.5" width="8" height="7" fill="url(#gYel)" stroke="#555" stroke-width="0.8"/><path d="M1419,278.5V276C1419,273 1424,273 1424,276V278" fill="none" stroke="#333" stroke-width="1.1"/>
<rect x="1431.5" y="274.5" width="11" height="11" fill="#8030C0" stroke="#000" stroke-width="1"/>
<circle cx="1455.5" cy="280" r="7" fill="#F8F8F8" stroke="#EDEDED" stroke-width="0.8"/>
<rect x="1431.5" y="293.5" width="11" height="11" fill="#0000F0" stroke="#000" stroke-width="1"/>
<circle cx="1455.5" cy="299" r="7" fill="#F8F8F8" stroke="#EDEDED" stroke-width="0.8"/>
<path d="M1402,312.5C1398.5,312.5 1397.7,315.5 1397.7,316.8C1397.7,319.5 1400,320.5 1400.3,323.5H1403.7C1404,320.5 1406.3,319.5 1406.3,316.8C1406.3,315.5 1405.5,312.5 1402,312.5Z" fill="url(#gYel)" stroke="#7A5A00" stroke-width="0.9"/>
<rect x="1414" y="316.5" width="8" height="7" fill="url(#gYel)" stroke="#555" stroke-width="0.8"/><path d="M1419,316.5V314C1419,311 1424,311 1424,314V316" fill="none" stroke="#333" stroke-width="1.1"/>
<rect x="1431.5" y="312.5" width="11" height="11" fill="#007000" stroke="#000" stroke-width="1"/>
<circle cx="1455.5" cy="318" r="7" fill="#F8F8F8" stroke="#EDEDED" stroke-width="0.8"/>
<path d="M1402,331.5C1398.5,331.5 1397.7,334.5 1397.7,335.8C1397.7,338.5 1400,339.5 1400.3,342.5H1403.7C1404,339.5 1406.3,338.5 1406.3,335.8C1406.3,334.5 1405.5,331.5 1402,331.5Z" fill="url(#gYel)" stroke="#7A5A00" stroke-width="0.9"/>
<rect x="1414" y="335.5" width="8" height="7" fill="url(#gYel)" stroke="#555" stroke-width="0.8"/><path d="M1419,335.5V333C1419,330 1424,330 1424,333V335" fill="none" stroke="#333" stroke-width="1.1"/>
<rect x="1431.5" y="331.5" width="11" height="11" fill="#fff" stroke="#000" stroke-width="1"/>
<circle cx="1455.5" cy="337" r="7" fill="#F8F8F8" stroke="#EDEDED" stroke-width="0.8"/>
<path d="M1380,299L1384,303L1392,295" fill="none" stroke="#111" stroke-width="1.6"/>
<path d="M1308.5,798L1305,801.5L1308.5,805M1586,798L1589.5,801.5L1586,805" fill="none" stroke="#333" stroke-width="1.8"/>
<defs><radialGradient id="fur1" cx="0.5" cy="0.5" r="0.5"><stop offset="0" stop-color="#A87868" stop-opacity="0.55"/><stop offset="1" stop-color="#A87868" stop-opacity="0"/></radialGradient></defs>
<defs><linearGradient id="furv" x1="0" y1="0" x2="0" y2="1"><stop offset="0" stop-color="#000" stop-opacity="0"/><stop offset="1" stop-color="#3A1A10" stop-opacity="0.35"/></linearGradient></defs><rect x="840" y="880" width="60" height="20" fill="url(#furv)"/><path d="M650,862L700,900M760,862L800,898M1075,862L1090,900" stroke="#B89080" stroke-width="6" opacity="0.25"/>
<path d="M12,869L24,867.5V879H12ZM26,867.2L38,865.5V879H26ZM12,881H24V892.5L12,891ZM26,881H38V894.5L26,892.8Z" fill="#fff"/>
<path d="M65,868H77L79,870H97V894H65Z" fill="#F0D080"/><path d="M65,873H97V894H65Z" fill="#F8E0A0"/><rect x="69" y="882" width="24" height="8" fill="#8AC0E8"/><rect x="72" y="885" width="18" height="5" fill="#F8E0A0"/><rect x="70" y="868" width="3" height="2" fill="#2A2"/><rect x="78" y="870" width="3" height="2" fill="#C22"/><rect x="85" y="872" width="3" height="2" fill="#28C"/>
<rect x="128" y="865" width="30" height="30" fill="#008A00"/><path d="M134,872H152L151,890L134,888Z" fill="#fff"/><path d="M138,872C138,866 148,866 148,872" fill="none" stroke="#fff" stroke-width="1.6"/><rect x="137" y="876" width="5" height="4" fill="#008A00"/><rect x="143" y="876" width="5" height="4" fill="#008A00"/><rect x="137" y="881" width="5" height="4" fill="#008A00"/><rect x="143" y="881" width="5" height="4" fill="#008A00"/>
<rect x="189" y="866" width="32" height="30" fill="#3050A0"/><rect x="190" y="867" width="30" height="14" fill="#4A6AC0"/><path d="M193,889H213V892H191Z" fill="#fff"/><rect x="195" y="879" width="14" height="10" fill="none" stroke="#fff" stroke-width="1.5"/><circle cx="210" cy="876" r="7" fill="#fff"/><circle cx="210" cy="876" r="5" fill="#3AA0D0"/>
<rect x="251" y="865" width="32" height="31" rx="3" fill="#0A0A0A"/><circle cx="267" cy="880" r="11" fill="#3A5AC0" stroke="#A0B0E0" stroke-width="1.5"/><g fill="#fff"><rect x="262" y="875" width="2.5" height="2.5"/><rect x="266" y="875" width="2.5" height="2.5"/><rect x="270" y="875" width="2.5" height="2.5"/><rect x="262" y="879" width="2.5" height="2.5"/><rect x="266" y="879" width="2.5" height="2.5"/><rect x="270" y="879" width="2.5" height="2.5"/><rect x="262" y="883" width="2.5" height="2.5"/><rect x="266" y="883" width="2.5" height="2.5"/><rect x="270" y="883" width="2.5" height="2.5"/></g>
<path d="M314,870H344V889H318L313,893Z" fill="#C8D0E0" stroke="#555" stroke-width="1"/><rect x="317" y="872" width="25" height="15" fill="#2A5AB0"/><rect x="320" y="875" width="9" height="6" fill="#fff"/><rect x="331" y="874" width="9" height="6" fill="#fff"/>
<rect x="375" y="865" width="30" height="31" rx="2" fill="#6ABA30"/><path d="M382,872C386,867 398,867 399,878C400,888 396,892 390,891C387,890 388,886 391,886L393,887C396,884 393,882 390,884L385,880L382,875Z" fill="#444"/>
<g transform="translate(453,880)"><circle r="11" fill="none" stroke="#2AA8E8" stroke-width="5"/><rect x="-11" y="-1.5" width="22" height="4" fill="#2AA8E8"/><rect x="1" y="3" width="12" height="4" fill="#8C6A5E"/><path d="M-14,12C-18,5 -2,-12 12,-14C16,-14 15,-10 10,-8" fill="none" stroke="#F8C820" stroke-width="2.2"/></g>
<g transform="translate(515,880)"><circle r="15" fill="#DB4437"/><path d="M0,0L-13,7.5A15,15 0 0 0 7.5,13Z" fill="#0F9D58"/><path d="M0,0L7.5,13A15,15 0 0 0 13,-7.5L0,-7.5Z" fill="#F4B400"/><circle r="7" fill="#fff"/><circle r="5.5" fill="#4285F4"/></g>
<rect x="561" y="864" width="31" height="31" fill="#111"/><path d="M561,864H566L563.5,872L564.5,874L568,867L570,865.5L574,874.5L580,878.5L592,877V879L580,895L561,877Z" fill="#fff"/><path d="M566,878L571,881L573,884" fill="none" stroke="#222" stroke-width="1.3"/><text x="580" y="878" font-family="Liberation Sans" font-size="15" fill="#fff">6</text>
<path d="M1395,883L1400,878L1405,883Z" fill="#fff"/>
<path d="M1422,875L1427,872L1432,875L1427,878ZM1422,881L1427,878L1432,881L1427,884ZM1424,885L1427,883L1430,885L1427,887Z" fill="#fff"/>
<path d="M1442,886H1444V884H1442ZM1446,886H1448V881H1446ZM1450,886H1452V878H1450ZM1454,886H1456V874H1454Z" fill="#fff"/>
<rect x="1470" y="874" width="7" height="12" fill="none" stroke="#fff" stroke-width="1.5"/><path d="M1466,874V880M1468,874V880" stroke="#fff" stroke-width="1"/>
<path d="M1489,877H1493L1497,873V888L1493,884H1489Z" fill="#fff"/><path d="M1500,876Q1503,880.5 1500,885M1502,874Q1506,880.5 1502,887" fill="none" stroke="#fff" stroke-width="1"/>
<rect x="167" y="282" width="57.5" height="58.5" fill="#979CA4"/>
<path d="M167.5,282V341M167,282.5H225M169.5,282V341M167,284.5H225M172.5,282V341M167,287.5H225M175.5,282V341M167,290.5H225M178.5,282V341M167,293.5H225M181.5,282V341M167,296.5H225M184.5,282V341M167,299.5H225M187.5,282V341M167,302.5H225M190.5,282V341M167,305.5H225M192.5,282V341M167,308.5H225M195.5,282V341M167,311.5H225M198.5,282V341M167,314.5H225M201.5,282V341M167,317.5H225M204.5,282V341M167,320.5H225M207.5,282V341M167,322.5H225M210.5,282V341M167,325.5H225M213.5,282V341M167,328.5H225M215.5,282V341M167,331.5H225M218.5,282V341M167,334.5H225M221.5,282V341M167,337.5H225M224.5,282V341M167,340.5H225" fill="none" stroke="#80858B" stroke-width="1"/>
<path d="M196,283 L196,311" fill="none" stroke="#2E9E2E" stroke-width="1.6" stroke-linejoin="round" stroke-linecap="round"/>
<path d="M196,311.5 L224,311.5" fill="none" stroke="#A44040" stroke-width="1.4" stroke-linejoin="round" stroke-linecap="round"/>
<path d="M196.25,311.75 L510,311.75 L533,396.75 L173.25,396.75 L196.25,311.75" fill="none" stroke="#0000FF" stroke-width="2.3" stroke-linejoin="round" stroke-linecap="round"/>
<path d="M185,354.25 L521.25,354.25" fill="none" stroke="#0000FF" stroke-width="1.6" stroke-linejoin="round" stroke-linecap="round"/>
<path d="M353.25,311.75 L353.25,396.75" fill="none" stroke="#0000FF" stroke-width="1.3" stroke-linejoin="round" stroke-linecap="round"/>
<path d="M101.5,408.5V438.5H130.5" fill="none" stroke="#5F6266" stroke-width="1.2"/>
<text x="104.5" y="407.5" font-family="Liberation Sans" font-size="13" fill="#5F6266">y</text>
<text x="133.5" y="438.5" font-family="Liberation Sans" font-size="13" fill="#5F6266">x</text>
<path d="M825,290 L875,281 L910,290 L858,299.7 Z" fill="#858990" opacity="0.9"/>
<path d="M870,290 L892.5,285.5" fill="none" stroke="#2E9E2E" stroke-width="1.6" stroke-linejoin="round" stroke-linecap="round"/>
<path d="M870,290 L884.5,294.5" fill="none" stroke="#A44040" stroke-width="1.6" stroke-linejoin="round" stroke-linecap="round"/>
<path d="M823,272 C827.5,270.7 840.5,266.0 850,264 C859.5,262.0 869.5,260.3 880,260 C890.5,259.7 903.0,261.0 913,262.2 C923.0,263.4 918.8,260.4 940,267.2 C961.2,274.0 1005.9,287.0 1040,302.8 C1074.1,318.6 1125.1,351.2 1144.4,362.2 C1163.7,373.2 1154.1,367.8 1156,368.9" fill="none" stroke="#0000FF" stroke-width="1.25" stroke-linejoin="round" stroke-linecap="round"/>
<path d="M771.6,297.7 C787.7,298.7 846.8,302.9 868.2,303.8 C889.6,304.7 888.0,302.4 900,303 C912.0,303.6 916.7,302.4 940,307.5 C963.3,312.6 1004.3,320.0 1040,333.9 C1075.7,347.8 1135.3,381.6 1154.4,391.1" fill="none" stroke="#0000FF" stroke-width="1.25" stroke-linejoin="round" stroke-linecap="round"/>
<path d="M771.6,297.7 L868.7,320.5" fill="none" stroke="#0000FF" stroke-width="1.25" stroke-linejoin="round" stroke-linecap="round"/>
<path d="M863.9,320.9 C879.5,326.2 928.4,341.8 957.8,352.9 C987.1,364.0 1016.1,377.6 1040,387.8 C1063.9,398.1 1090.8,410.0 1101,414.4" fill="none" stroke="#0000FF" stroke-width="1.25" stroke-linejoin="round" stroke-linecap="round"/>
<path d="M824.5,325.7 L1126.7,438.9" fill="none" stroke="#0000FF" stroke-width="1.25" stroke-linejoin="round" stroke-linecap="round"/>
<path d="M783.4,266 L785.1,328.3" fill="none" stroke="#0000FF" stroke-width="1.25" stroke-linejoin="round" stroke-linecap="round"/>
<path d="M887.5,275 L891.7,381.7" fill="none" stroke="#0000FF" stroke-width="1.25" stroke-linejoin="round" stroke-linecap="round"/>
<path d="M980.5,269.4 L980.8,355.7" fill="none" stroke="#0000FF" stroke-width="1.25" stroke-linejoin="round" stroke-linecap="round"/>
<path d="M1112.2,355.6 L1105.6,462.2" fill="none" stroke="#0000FF" stroke-width="1.25" stroke-linejoin="round" stroke-linecap="round"/>
<path d="M891.7,381.7 L980.8,355.7" fill="none" stroke="#0000FF" stroke-width="1.25" stroke-linejoin="round" stroke-linecap="round"/>
<path d="M1101,414.4 C1105.7,411.8 1120.0,402.8 1128.9,398.9 C1137.8,395.0 1150.2,392.4 1154.4,391.1" fill="none" stroke="#0000FF" stroke-width="1.25" stroke-linejoin="round" stroke-linecap="round"/>
<path d="M767.5,262.5 C772.9,262.3 787.1,260.9 800,261.2 C812.9,261.5 830.3,262.4 845,264.5 C859.7,266.6 868.8,267.9 888,273.5 C907.2,279.1 934.7,289.1 960,298 C985.3,306.9 1016.1,317.1 1040,326.7 C1063.9,336.3 1092.8,350.8 1103.3,355.6" fill="none" stroke="#0000FF" stroke-width="2.3" stroke-linejoin="round" stroke-linecap="round"/>
<path d="M767.5,262.5 C776.8,264.5 806.2,270.0 823,274.5 C839.8,279.0 860.5,287.0 868,289.5" fill="none" stroke="#0000FF" stroke-width="2.3" stroke-linejoin="round" stroke-linecap="round"/>
<path d="M868,289.5 C870.0,288.2 874.7,284.8 880,282 C885.3,279.2 894.5,274.6 900,272.5 C905.5,270.4 905.5,270.5 913.3,269.4 C921.1,268.3 935.6,266.1 946.7,266.1 C957.8,266.1 968.9,267.5 980,269.4 C991.1,271.2 1003.3,273.9 1013.3,277.2 C1023.3,280.5 1028.2,283.4 1040,289.4 C1051.8,295.4 1069.6,304.1 1084.4,313.3 C1099.2,322.5 1117.0,335.1 1128.9,344.4 C1140.8,353.7 1151.5,364.8 1156,368.9" fill="none" stroke="#0000FF" stroke-width="2.3" stroke-linejoin="round" stroke-linecap="round"/>
<path d="M1103.3,355.6 C1105.7,355.4 1112.4,354.0 1117.8,354.4 C1123.2,354.8 1129.2,355.4 1135.6,357.8 C1142.0,360.2 1152.6,367.0 1156,368.9" fill="none" stroke="#0000FF" stroke-width="2.3" stroke-linejoin="round" stroke-linecap="round"/>
<path d="M767.5,262.5 L773.5,331 L868.7,318.7 L868,289.5" fill="none" stroke="#0000FF" stroke-width="2.3" stroke-linejoin="round" stroke-linecap="round"/>
<path d="M773.5,331 L1097.3,470.7 L1153.3,412.9 L1156,368.9" fill="none" stroke="#0000FF" stroke-width="2.3" stroke-linejoin="round" stroke-linecap="round"/>
<path d="M868.7,318.7 L1153.3,412.9" fill="none" stroke="#0000FF" stroke-width="2.3" stroke-linejoin="round" stroke-linecap="round"/>
<path d="M1103.3,355.6 L1097.3,470.7" fill="none" stroke="#0000FF" stroke-width="2.3" stroke-linejoin="round" stroke-linecap="round"/>
<path d="M718.5,409V438L739,433M718.5,438L739,443.3" fill="none" stroke="#5F6266" stroke-width="1.2"/>
<text x="721" y="409" font-family="Liberation Sans" font-size="13" fill="#5F6266">z</text>
<text x="742" y="433" font-family="Liberation Sans" font-size="13" fill="#5F6266">y</text>
<text x="741" y="445" font-family="Liberation Sans" font-size="13" fill="#5F6266">x</text>
<rect x="74" y="606" width="88" height="86.60000000000002" fill="#979CA4"/>
<path d="M74.5,606V693M74,606.5H163M78.5,606V693M74,610.5H163M82.5,606V693M74,614.5H163M87.5,606V693M74,618.5H163M91.5,606V693M74,623.5H163M96.5,606V693M74,627.5H163M100.5,606V693M74,631.5H163M104.5,606V693M74,636.5H163M109.5,606V693M74,640.5H163M113.5,606V693M74,644.5H163M118.5,606V693M74,649.5H163M122.5,606V693M74,653.5H163M126.5,606V693M74,657.5H163M131.5,606V693M74,662.5H163M135.5,606V693M74,666.5H163M140.5,606V693M74,670.5H163M144.5,606V693M74,675.5H163M148.5,606V693M74,679.5H163M153.5,606V693M74,683.5H163M157.5,606V693M74,688.5H163M162.5,606V693M74,692.5H163" fill="none" stroke="#80858B" stroke-width="1"/>
<path d="M117.8,606 L117.8,648" fill="none" stroke="#2E9E2E" stroke-width="1.6" stroke-linejoin="round" stroke-linecap="round"/>
<path d="M118,649 L161,649" fill="none" stroke="#A44040" stroke-width="1.6" stroke-linejoin="round" stroke-linecap="round"/>
<path d="M102.8,619 A747,747 0 0 1 608,619" fill="none" stroke="#0000FF" stroke-width="1.25"/>
<path d="M83.5,646 A2963,2963 0 0 1 627.3,646" fill="none" stroke="#0000FF" stroke-width="1.25"/>
<path d="M117.8,670.6 A978,978 0 0 1 593,670.6" fill="none" stroke="#0000FF" stroke-width="1.25"/>
<path d="M83.5,646 L117.8,670.6" fill="none" stroke="#0000FF" stroke-width="1.25" stroke-linejoin="round" stroke-linecap="round"/>
<path d="M627.3,646 L593.0,670.6" fill="none" stroke="#0000FF" stroke-width="1.25" stroke-linejoin="round" stroke-linecap="round"/>
<path d="M87.8,601 L87.8,692" fill="none" stroke="#0000FF" stroke-width="1.25" stroke-linejoin="round" stroke-linecap="round"/>
<path d="M623.0,601 L623.0,692" fill="none" stroke="#0000FF" stroke-width="1.25" stroke-linejoin="round" stroke-linecap="round"/>
<path d="M355.4,575 L355.4,692" fill="none" stroke="#0000FF" stroke-width="1.25" stroke-linejoin="round" stroke-linecap="round"/>
<path d="M83.5,599 A1552,1552 0 0 1 627.3,599" fill="none" stroke="#0000FF" stroke-width="2.3"/>
<path d="M117.8,648 A493,493 0 0 1 593,648" fill="none" stroke="#0000FF" stroke-width="2.3"/>
<path d="M83.5,599 C86.6,601.9 96.2,608.1 101.9,616.25 C107.6,624.4 115.2,642.7 117.8,648" fill="none" stroke="#0000FF" stroke-width="2.3" stroke-linejoin="round" stroke-linecap="round"/>
<path d="M627.3,599 C624.2,601.9 614.6,608.1 608.9,616.25 C603.2,624.4 595.6,642.7 593.0,648" fill="none" stroke="#0000FF" stroke-width="2.3" stroke-linejoin="round" stroke-linecap="round"/>
<path d="M83.5,599 L83.5,692.2 L627.3,692.2 L627.3,599" fill="none" stroke="#0000FF" stroke-width="2.3" stroke-linejoin="round" stroke-linecap="round"/>
<path d="M117.8,648 L117.8,692" fill="none" stroke="#0000FF" stroke-width="2.3" stroke-linejoin="round" stroke-linecap="round"/>
<path d="M593,648 L593,692" fill="none" stroke="#0000FF" stroke-width="2.3" stroke-linejoin="round" stroke-linecap="round"/>
<path d="M101.5,726V756H130.5" fill="none" stroke="#5F6266" stroke-width="1.2"/>
<text x="104.5" y="725" font-family="Liberation Sans" font-size="13" fill="#5F6266">z</text>
<text x="133.5" y="756" font-family="Liberation Sans" font-size="13" fill="#5F6266">x</text>
<rect x="940" y="608.2" width="131.5999999999999" height="131.39999999999998" fill="#979CA4"/>
<path d="M940.5,608V740M940,608.5H1072M946.5,608V740M940,614.5H1072M953.5,608V740M940,621.5H1072M959.5,608V740M940,627.5H1072M966.5,608V740M940,634.5H1072M972.5,608V740M940,641.5H1072M979.5,608V740M940,647.5H1072M986.5,608V740M940,654.5H1072M992.5,608V740M940,660.5H1072M999.5,608V740M940,667.5H1072M1005.5,608V740M940,673.5H1072M1012.5,608V740M940,680.5H1072M1018.5,608V740M940,687.5H1072M1025.5,608V740M940,693.5H1072M1032.5,608V740M940,700.5H1072M1038.5,608V740M940,706.5H1072M1045.5,608V740M940,713.5H1072M1051.5,608V740M940,719.5H1072M1058.5,608V740M940,726.5H1072M1065.5,608V740M940,733.5H1072M1071.5,608V740M940,739.5H1072" fill="none" stroke="#80858B" stroke-width="1"/>
<path d="M1006.2,673.8 L1071,673.8" fill="none" stroke="#A44040" stroke-width="1.6" stroke-linejoin="round" stroke-linecap="round"/>
<path d="M808.9,560.7 Q870,552 1006.2,580.7" fill="none" stroke="#0000FF" stroke-width="1.25"/>
<path d="M808.9,670 Q914.45,687.25 1006.2,706.7" fill="none" stroke="#0000FF" stroke-width="1.25"/>
<path d="M907.8,562.5 L910.4,627.8" fill="none" stroke="#0000FF" stroke-width="1.25" stroke-linejoin="round" stroke-linecap="round"/>
<path d="M837.3,604.4 L831.6,740" fill="none" stroke="#0000FF" stroke-width="1.25" stroke-linejoin="round" stroke-linecap="round"/>
<path d="M808.9,597.8 Q914.65,620.05 1006.2,673.3" fill="none" stroke="#0000FF" stroke-width="2.3"/>
<path d="M808.9,560.7 L808.9,740 L1006.2,740 L1006.2,580.7" fill="none" stroke="#0000FF" stroke-width="2.3" stroke-linejoin="round" stroke-linecap="round"/>
<path d="M718.5,726V756H747.5" fill="none" stroke="#5F6266" stroke-width="1.2"/>
<text x="721.5" y="725" font-family="Liberation Sans" font-size="13" fill="#5F6266">z</text>
<text x="750.5" y="756" font-family="Liberation Sans" font-size="13" fill="#5F6266">y</text>
</svg>
<div class="t" style="left:556px;top:4px;font-size:14.75px;line-height:17px;color:#3A3A3A">Arrière-voussure de Marseille (41 Ko) - Rhino 6 Licence pour le pack école</div>
<div class="t" style="left:7px;top:26px;font-size:11.8px;letter-spacing:-0.2px;">Fichier</div>
<div class="t" style="left:56px;top:26px;font-size:11.8px;letter-spacing:-0.2px;">Édition</div>
<div class="t" style="left:107px;top:26px;font-size:11.8px;letter-spacing:-0.2px;">Vue</div>
<div class="t" style="left:141px;top:26px;font-size:11.8px;letter-spacing:-0.2px;">Courbe</div>
<div class="t" style="left:194px;top:26px;font-size:11.8px;letter-spacing:-0.2px;">Surface</div>
<div class="t" style="left:247px;top:26px;font-size:11.8px;letter-spacing:-0.2px;">Solide</div>
<div class="t" style="left:293px;top:26px;font-size:11.8px;letter-spacing:-0.2px;">Maillage</div>
<div class="t" style="left:352px;top:26px;font-size:11.8px;letter-spacing:-0.2px;">Cote</div>
<div class="t" style="left:391px;top:26px;font-size:11.8px;letter-spacing:-0.2px;">Transformer</div>
<div class="t" style="left:470px;top:26px;font-size:11.8px;letter-spacing:-0.2px;">Outils</div>
<div class="t" style="left:515px;top:26px;font-size:11.8px;letter-spacing:-0.2px;">Analyse</div>
<div class="t" style="left:570px;top:26px;font-size:11.8px;letter-spacing:-0.2px;">Rendu</div>
<div class="t" style="left:618px;top:26px;font-size:11.8px;letter-spacing:-0.2px;">Panneaux</div>
<div class="t" style="left:683px;top:26px;font-size:11.8px;letter-spacing:-0.2px;">?</div>
<div class="t" style="left:8px;top:45px;font-size:11.8px;letter-spacing:-0.2px;">Commande: _ShadeSelected</div>
<div class="t" style="left:8px;top:60px;font-size:11.8px;letter-spacing:-0.2px;">Le mode d'ombrage par sélection est désactivé.</div>
<div class="t" style="left:8px;top:76px;font-size:11.8px;letter-spacing:-0.2px;font-weight:bold;-webkit-text-stroke:0">Commande:</div>
<div class="t" style="left:17px;top:103px;font-size:11.8px;letter-spacing:-0.2px;">Standard</div>
<div class="t" style="left:86px;top:103px;font-size:11.8px;letter-spacing:-0.2px;">PlansC</div>
<div class="t" style="left:143px;top:103px;font-size:11.8px;letter-spacing:-0.2px;">Définir la vue</div>
<div class="t" style="left:232px;top:103px;font-size:11.8px;letter-spacing:-0.2px;">Affichage</div>
<div class="t" style="left:305px;top:103px;font-size:11.8px;letter-spacing:-0.2px;">Sélection</div>
<div class="t" style="left:374px;top:103px;font-size:11.8px;letter-spacing:-0.2px;">Disposition des fenêtres</div>
<div class="t" style="left:520px;top:103px;font-size:11.8px;letter-spacing:-0.2px;">Visibilité</div>
<div class="t" style="left:585px;top:103px;font-size:11.8px;letter-spacing:-0.2px;">Transformer</div>
<div class="t" style="left:671px;top:103px;font-size:11.8px;letter-spacing:-0.2px;">Courbes</div>
<div class="t" style="left:735px;top:103px;font-size:11.8px;letter-spacing:-0.2px;">Surfaces</div>
<div class="t" style="left:801px;top:103px;font-size:11.8px;letter-spacing:-0.2px;">Solides</div>
<div class="t" style="left:859px;top:103px;font-size:11.8px;letter-spacing:-0.2px;">Maillages</div>
<div class="t" style="left:929px;top:103px;font-size:11.8px;letter-spacing:-0.2px;">Rendu</div>
<div class="t" style="left:985px;top:103px;font-size:11.8px;letter-spacing:-0.2px;">Dessin</div>
<div class="t" style="left:1039px;top:103px;font-size:11.8px;letter-spacing:-0.2px;">Nouveautés dans la V6</div>
<div class="t" style="left:74px;top:159px;font-size:11.8px;color:#333A44">Dessus</div>
<div class="t" style="left:689px;top:159px;font-size:11.6px;font-weight:bold;color:#1A2230;-webkit-text-stroke:0">Perspective</div>
<div class="t" style="left:73px;top:480px;font-size:11.8px;color:#333A44">Face</div>
<div class="t" style="left:690px;top:480px;font-size:11.8px;color:#333A44">Droite</div>
<div class="t" style="left:74px;top:797px;font-size:11.8px;letter-spacing:-0.2px;">Perspective</div>
<div class="t" style="left:149px;top:797px;font-size:11.8px;letter-spacing:-0.2px;">Dessus</div>
<div class="t" style="left:200px;top:797px;font-size:11.8px;letter-spacing:-0.2px;">Face</div>
<div class="t" style="left:239px;top:797px;font-size:11.8px;letter-spacing:-0.2px;">Droite</div>
<div class="t" style="left:24px;top:822px;font-size:11.8px;letter-spacing:-0.2px;">Fin</div>
<div class="t" style="left:64px;top:822px;font-size:11.8px;letter-spacing:-0.2px;">Proche</div>
<div class="t" style="left:124px;top:822px;font-size:11.8px;letter-spacing:-0.2px;">Point</div>
<div class="t" style="left:175px;top:822px;font-size:11.8px;letter-spacing:-0.2px;">Mi</div>
<div class="t" style="left:212px;top:822px;font-size:11.8px;letter-spacing:-0.2px;">Cen</div>
<div class="t" style="left:256px;top:822px;font-size:11.8px;letter-spacing:-0.2px;">Int</div>
<div class="t" style="left:293px;top:822px;font-size:11.8px;letter-spacing:-0.2px;">Perp</div>
<div class="t" style="left:340px;top:822px;font-size:11.8px;letter-spacing:-0.2px;">Tan</div>
<div class="t" style="left:383px;top:822px;font-size:11.8px;letter-spacing:-0.2px;">Quad</div>
<div class="t" style="left:436px;top:822px;font-size:11.8px;letter-spacing:-0.2px;">Nœud</div>
<div class="t" style="left:492px;top:822px;font-size:11.8px;letter-spacing:-0.2px;">Sommet</div>
<div class="t" style="left:559px;top:822px;font-size:11.8px;letter-spacing:-0.2px;">Projeter</div>
<div class="t" style="left:624px;top:822px;font-size:11.8px;letter-spacing:-0.2px;">Désactiver</div>
<div class="t" style="left:6px;top:844px;font-size:11.8px;letter-spacing:-0.2px;">PlanC</div>
<div class="t" style="left:61px;top:844px;font-size:11.8px;letter-spacing:-0.2px;">x 1258.587</div>
<div class="t" style="left:155px;top:844px;font-size:11.8px;letter-spacing:-0.2px;">y -9.147</div>
<div class="t" style="left:246px;top:844px;font-size:11.8px;letter-spacing:-0.2px;">z 0.000</div>
<div class="t" style="left:322px;top:844px;font-size:11.8px;letter-spacing:-0.2px;">Millimètres</div>
<div class="t" style="left:415px;top:844px;font-size:11.8px;letter-spacing:-0.2px;">Calque 03</div>
<div class="t" style="left:571px;top:844px;font-size:11.8px;letter-spacing:-0.2px;">Magnétisme de la grille</div>
<div class="t" style="left:707px;top:844px;font-size:11.8px;letter-spacing:-0.2px;font-weight:bold;-webkit-text-stroke:0">Ortho</div>
<div class="t" style="left:751px;top:844px;font-size:11.8px;letter-spacing:-0.2px;font-weight:bold;-webkit-text-stroke:0">Planéité</div>
<div class="t" style="left:808px;top:844px;font-size:11.8px;letter-spacing:-0.2px;font-weight:bold;-webkit-text-stroke:0">Accrochages</div>
<div class="t" style="left:886px;top:844px;font-size:11.8px;letter-spacing:-0.2px;font-weight:bold;-webkit-text-stroke:0">Repérage intelligent</div>
<div class="t" style="left:1010px;top:844px;font-size:11.8px;letter-spacing:-0.2px;">Manipulateur</div>
<div class="t" style="left:1095px;top:844px;font-size:11.8px;letter-spacing:-0.2px;">Enregistrer l'historique</div>
<div class="t" style="left:1227px;top:844px;font-size:11.8px;letter-spacing:-0.2px;">Filtre</div>
<div class="t" style="left:1261px;top:844px;font-size:11.8px;letter-spacing:-0.2px;">Minutes depuis le dernier enregistrement : 16</div>
<div class="t" style="left:1321px;top:168px;font-size:11.8px;letter-spacing:-0.2px;">Pr...</div>
<div class="t" style="left:1366px;top:168px;font-size:11.8px;letter-spacing:-0.2px;">C...</div>
<div class="t" style="left:1412px;top:168px;font-size:11.8px;letter-spacing:-0.2px;">R...</div>
<div class="t" style="left:1460px;top:168px;font-size:11.8px;letter-spacing:-0.2px;">M...</div>
<div class="t" style="left:1506px;top:168px;font-size:11.8px;letter-spacing:-0.2px;">Bi...</div>
<div class="t" style="left:1553px;top:168px;font-size:11.8px;letter-spacing:-0.2px;">Ai...</div>
<div class="t" style="left:1305px;top:214px;font-size:11.8px;letter-spacing:-0.2px;">Nom</div>
<div class="t" style="left:1452px;top:214px;font-size:11.8px;letter-spacing:-0.2px;">Matériau</div>
<div class="t" style="left:1532px;top:214px;font-size:11.8px;letter-spacing:-0.2px;">Type de lig..</div>
<div class="t" style="left:1306px;top:236px;font-size:11.8px;letter-spacing:-0.2px;">Défaut</div>
<div class="t" style="left:1529px;top:236px;font-size:11.8px;letter-spacing:-0.2px;">Continu</div>
<div class="t" style="left:1306px;top:255px;font-size:11.8px;letter-spacing:-0.2px;color:#fff;">Calque 01</div>
<div class="t" style="left:1529px;top:255px;font-size:11.8px;letter-spacing:-0.2px;color:#fff;">Continu</div>
<div class="t" style="left:1306px;top:274px;font-size:11.8px;letter-spacing:-0.2px;">Calque 02</div>
<div class="t" style="left:1529px;top:274px;font-size:11.8px;letter-spacing:-0.2px;">Continu</div>
<div class="t" style="left:1306px;top:293px;font-size:11.8px;letter-spacing:-0.2px;font-weight:bold;-webkit-text-stroke:0;">Calque 03</div>
<div class="t" style="left:1529px;top:293px;font-size:11.8px;letter-spacing:-0.2px;font-weight:bold;-webkit-text-stroke:0;">Continu</div>
<div class="t" style="left:1306px;top:312px;font-size:11.8px;letter-spacing:-0.2px;">Calque 04</div>
<div class="t" style="left:1529px;top:312px;font-size:11.8px;letter-spacing:-0.2px;">Continu</div>
<div class="t" style="left:1306px;top:331px;font-size:11.8px;letter-spacing:-0.2px;">Calque 05</div>
<div class="t" style="left:1529px;top:331px;font-size:11.8px;letter-spacing:-0.2px;">Continu</div>
<div class="t" style="left:1539px;top:865px;font-size:11.8px;color:#fff;-webkit-text-stroke:0">18:47</div>
<div class="t" style="left:1524px;top:881px;font-size:11.8px;color:#fff;-webkit-text-stroke:0">19/02/2020</div>
</body></html>
